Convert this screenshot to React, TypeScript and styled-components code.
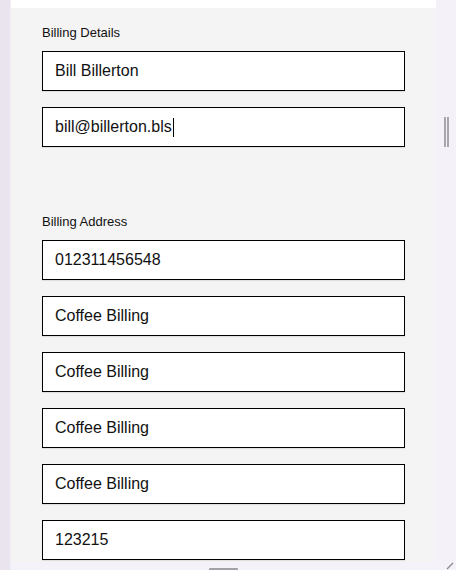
import React from "react";
import styled, { createGlobalStyle } from "styled-components";

const Global = createGlobalStyle`
  html, body { margin: 0; padding: 0; }
  body { font-family: "Liberation Sans", Arial, sans-serif; background: #f5f1f8; }
`;

const Root = styled.div`
  display: flex;
  height: 570px;
  width: 456px;
  overflow: hidden;
  background: #f5f1f8;
  position: relative;
`;

const LeftStrip = styled.div`
  width: 10px;
  flex: none;
  background: #e9e4ee;
  border-right: 1px solid #f1edf4;
`;

const Main = styled.div`
  width: 425px;
  flex: none;
  display: flex;
  flex-direction: column;
  height: 562px;
`;

const TopBar = styled.div`
  height: 8px;
  background: #ffffff;
  flex: none;
`;

const Panel = styled.div`
  flex: 1;
  background: #f4f4f4;
  padding: 0 31px;
  display: flex;
  flex-direction: column;
`;

const Section = styled.section<{ $top: number }>`
  display: flex;
  flex-direction: column;
  gap: 16px;
  margin-top: ${(p) => p.$top}px;
`;

const Label = styled.div`
  font-size: 13px;
  line-height: 15px;
  color: #111;
  margin-bottom: -5px;
`;

const Field = styled.div`
  box-sizing: border-box;
  width: 363px;
  height: 40px;
  border: 1px solid #000;
  background: #fff;
  box-shadow: 0 1px 1px rgba(0, 0, 0, 0.08);
  padding: 0 12px;
  display: flex;
  align-items: center;
  font-size: 16px;
  color: #111;
`;

const Caret = styled.span`
  display: inline-block;
  width: 1px;
  height: 19px;
  background: #000;
  margin-left: 1px;
`;

const ScrollThumb = styled.div`
  position: absolute;
  left: 444px;
  top: 117px;
  width: 6px;
  height: 30px;
  display: flex;
  gap: 1px;
  & > span {
    width: 2px;
    background: #a9a7ac;
  }
`;

const BottomTab = styled.div`
  position: absolute;
  left: 209px;
  top: 568px;
  width: 29px;
  height: 2px;
  background: #a3a1a6;
  border-radius: 1px 1px 0 0;
`;

const Grip = styled.svg`
  position: absolute;
  left: 446px;
  top: 562px;
`;

export default function App() {
  const address = [
    "012311456548",
    "Coffee Billing",
    "Coffee Billing",
    "Coffee Billing",
    "Coffee Billing",
    "123215",
  ];
  return (
    <Root>
      <Global />
      <LeftStrip />
      <Main>
        <TopBar />
        <Panel>
          <Section $top={17}>
            <Label>Billing Details</Label>
            <Field>Bill Billerton</Field>
            <Field>
              bill@billerton.bls
              <Caret />
            </Field>
          </Section>
          <Section $top={67}>
            <Label>Billing Address</Label>
            {address.map((v, i) => (
              <Field key={i}>{v}</Field>
            ))}
          </Section>
        </Panel>
      </Main>
      <ScrollThumb>
        <span />
        <span />
      </ScrollThumb>
      <BottomTab />
      <Grip width="8" height="8" viewBox="0 0 8 8">
        <line x1="1" y1="7" x2="7" y2="1" stroke="#8a888c" strokeWidth="1.2" />
      </Grip>
    </Root>
  );
}
